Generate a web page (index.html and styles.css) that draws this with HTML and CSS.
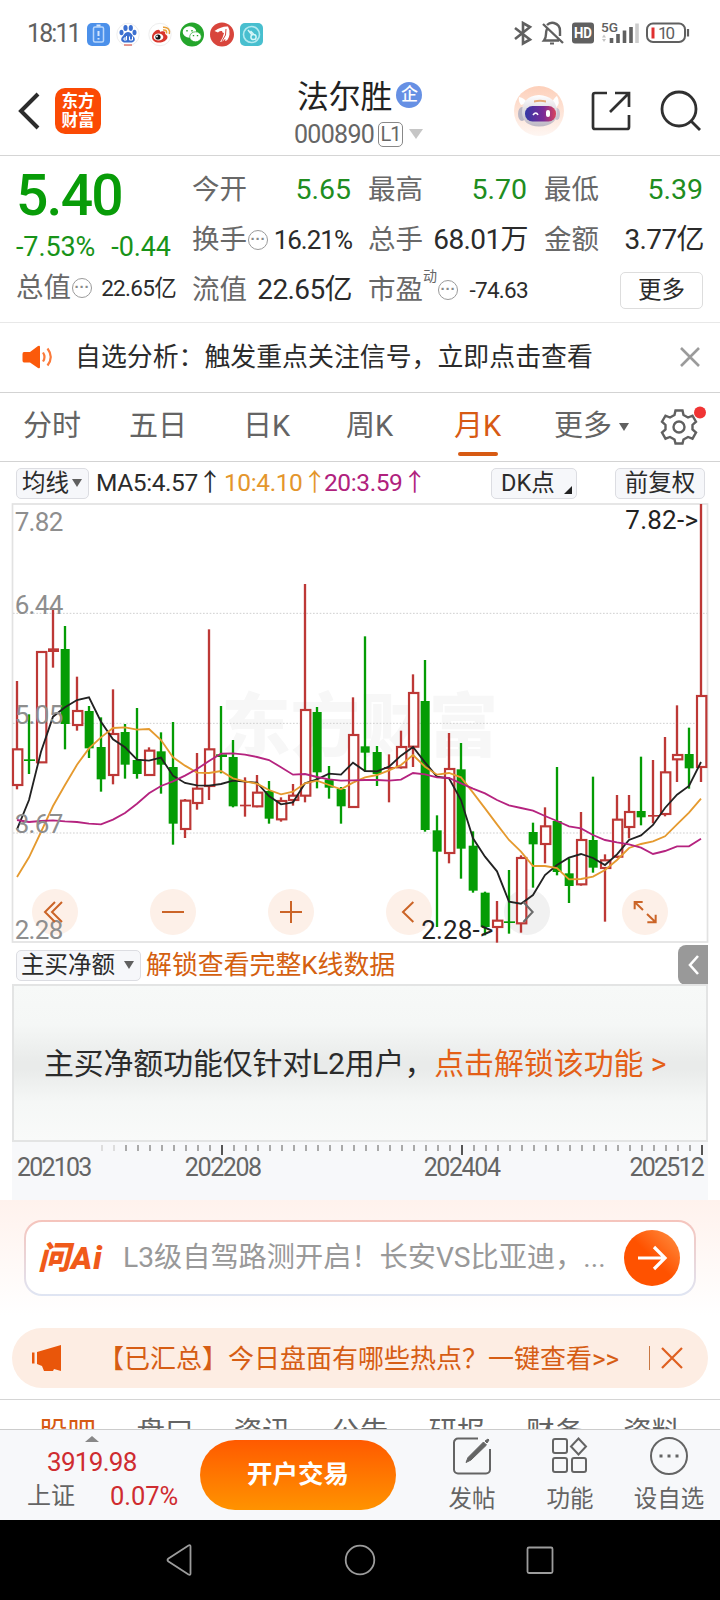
FILE: index.html
```html
<!DOCTYPE html>
<html lang="zh-CN">
<head>
<meta charset="utf-8">
<title>法尔胜 000890</title>
<link rel="stylesheet" href="styles.css">
</head>
<body>
<div class="screen">
  <div class="status">
    <span class="clock">18:11</span>
    <svg class="status-apps" width="178" height="26" viewBox="0 0 178 26">
      <rect x="1" y="2" width="23" height="23" rx="5" fill="#4b90ea"/>
      <rect x="7.500" y="6" width="10" height="15" rx="1.500" fill="none" stroke="#b9d6fb" stroke-width="1.500"/><path d="M10.500 4.500h4M12.500 10v5M12.500 17v1.500" stroke="#d5e6fd" stroke-width="2"/>
      <circle cx="42" cy="13.500" r="11.200" fill="#fff" stroke="#eee"/>
      <g fill="#3b6fd0"><ellipse cx="35.500" cy="11.500" rx="2" ry="2.800"/><ellipse cx="39.500" cy="7" rx="2.100" ry="3"/><ellipse cx="44.800" cy="7" rx="2.100" ry="3"/><ellipse cx="48.500" cy="11.500" rx="2" ry="2.800"/><path d="M42 11c-3 0-4 3-6 5-2 3 0 5.500 3 5.500h6c3 0 5-2.500 3-5.500-2-2-3-5-6-5z"/></g>
      <path d="M40.500 15v4h-2.500v-2h2.500M43.500 15.500v3.500h3v-3.500" fill="none" stroke="#fff"/><path d="M38 24h8" stroke="#d3382c"/>
      <circle cx="74" cy="13.500" r="11.200" fill="#fff" stroke="#eee"/>
      <path d="M66 16c0-4 5-8 7-7 1.500.5 1 2 1 2s4-1.500 5 0c.5 1 0 2 0 2 6 3 0 9-6 8.500-4 0-7-2-7-5.500z" fill="#d9362c"/><ellipse cx="72.500" cy="16" rx="4.800" ry="3.600" fill="#fff"/><circle cx="72" cy="16" r="2.600" fill="#111"/><circle cx="71" cy="15.500" r=".9" fill="#fff"/><path d="M77 9c3-.5 4 1 3.500 3.500M77 6.200c5-.5 7.500 3 6.300 6.800" fill="none" stroke="#e9a03a" stroke-width="1.500"/>
      <circle cx="106" cy="13.500" r="12" fill="#24a52b"/><ellipse cx="103.500" cy="11" rx="6.800" ry="5.700" fill="#fff"/><ellipse cx="109.500" cy="15.800" rx="5.800" ry="5" fill="#fff" stroke="#24a52b" stroke-width=".7"/><path d="M101 9v1.500M106 9v1.500M107.500 14v1.200M111.500 14v1.200" stroke="#24a52b" stroke-width="1.400"/>
      <circle cx="136" cy="13.500" r="12" fill="#d8453c"/><path d="M128.500 10q7-5 13.500-4.500 2 3 1.500 8-1 6-4.500 6.500 1-2 0-2-2 3-5 3 3-4 4-9-2 0-2-2-3-.5-4 1.500z" fill="#fff"/><path d="M136 20q5-6 4-12" stroke="#d8453c" fill="none"/>
      <rect x="154" y="2" width="23" height="23" rx="5" fill="#48bfcf"/><circle cx="165.500" cy="13.500" r="8" fill="none" stroke="#b4eaf0" stroke-width="1.600"/><circle cx="167.500" cy="16" r="2.600" fill="none" stroke="#d6f6f8" stroke-width="1.500"/><path d="M166 14l-4-5M167.500 13l-3-3" stroke="#d6f6f8" stroke-width="1.500"/>
    </svg>
    <svg class="status-signals" width="180" height="26" viewBox="0 0 180 26" fill="none" stroke="#606060">
      <path d="M2 7l15 11.500-7 4V2l7 4L2 18" stroke-width="2.600"/>
      <path d="M34 4q3-3 7-2 6 1.500 6 8v5M30 3l20 19M34 8q-1 2-1 5 0 4-2 6.500h15" stroke-width="2.400"/><path d="M37 22.500h4" stroke-width="2"/>
      <rect x="59" y="1.500" width="22" height="21" rx="3" fill="#606060" stroke="none"/>
      <text x="61" y="17" class="hd" textLength="18" lengthAdjust="spacingAndGlyphs">HD</text>
      <text x="88" y="10.500" class="fiveg" textLength="17" lengthAdjust="spacingAndGlyphs">5G</text>
      <path d="M98.500 17v5M105 13v9M111.500 9.500V22M118 6v16" stroke-width="3.600"/><path d="M124 2.500V22" stroke="#ccc" stroke-width="3.600"/><path d="M89 16.500l2-3 2 3zM89 18l2 3 2-3z" fill="#c4c4c4" stroke="none"/>
      <rect x="134" y="2.500" width="38" height="18.500" rx="6" stroke-width="2"/><path d="M175 8v7.500" stroke-width="2.200"/><path d="M140 6.500v11" stroke="#e02f2f" stroke-width="3"/>
      <text x="145" y="18" class="batt" textLength="17">10</text>
    </svg>
  </div>

  <header class="head">
    <svg class="back" width="24" height="40" viewBox="0 0 24 40"><path d="M22 3L5 20l17 17" fill="none" stroke="#2c2c2c" stroke-width="4"/></svg>
    <div class="brand"><span>东方</span><span>财富</span></div>
    <div class="title">
      <div class="name"><span>法尔胜</span><i class="ent">企</i></div>
      <div class="code"><span>000890</span><i class="lv">L1</i><i class="tri light"></i></div>
    </div>
    <svg class="bot" width="52" height="52" viewBox="0 0 52 52">
      <defs>
        <linearGradient id="g1" x1="0" y1="0" x2="0" y2="1"><stop offset="0" stop-color="#fdd0ba"/><stop offset="1" stop-color="#fef6f2"/></linearGradient>
        <linearGradient id="g2"><stop offset="0" stop-color="#3338a5"/><stop offset=".6" stop-color="#7b2a97"/><stop offset="1" stop-color="#d9445c"/></linearGradient>
        <linearGradient id="g3" x1="0" y1="0" x2="0" y2="1"><stop offset="0" stop-color="#fff"/><stop offset="1" stop-color="#bdb8c4"/></linearGradient>
      </defs>
      <circle cx="26" cy="26" r="25" fill="url(#g1)"/>
      <path d="M8 20q-3-4-2-8 6 1 8 6zM39 17q3-5 5-6 4 7-1 12z" fill="#fff"/>
      <ellipse cx="9" cy="29" rx="4" ry="7" fill="#b9b6c4"/><ellipse cx="44" cy="29" rx="3" ry="6" fill="#c9c4cf"/>
      <path d="M9 28q0-17 17-18Q43 11 44 26q1 15-18 15.500Q10 41 9 28z" fill="url(#g3)"/>
      <path d="M21 15.500q6-1.500 12 0v2q-6-1.500-12 0z" fill="#e4a877"/>
      <rect x="12" y="21" width="31" height="15.500" rx="7.500" fill="url(#g2)"/>
      <path d="M20 30q3-4 5 0" fill="none" stroke="#fff" stroke-width="1.600"/><rect x="33" y="25" width="4" height="7" rx="2" fill="#fff"/>
    </svg>
    <svg class="share" width="42" height="42" viewBox="0 0 42 42" fill="none" stroke="#303030" stroke-width="2.700"><path d="M17 3H5a2 2 0 0 0-2 2v32a2 2 0 0 0 2 2h32a2 2 0 0 0 2-2V25M25 3h14v14M39 3L20 22"/></svg>
    <svg class="search" width="42" height="42" viewBox="0 0 42 42" fill="none" stroke="#303030" stroke-width="2.800"><circle cx="19" cy="19" r="17"/><path d="M31 31l9 9"/></svg>
  </header>

  <section class="quote">
    <div class="main">
      <div class="price">5.40</div>
      <div class="chg"><span>-7.53%</span><span>-0.44</span></div>
      <div class="cell small"><b>总值</b><i class="dots">···</i><span>22.65亿</span></div>
    </div>
    <div class="grid">
      <div class="cell up"><b>今开</b><span>5.65</span></div>
      <div class="cell up"><b>最高</b><span>5.70</span></div>
      <div class="cell up"><b>最低</b><span>5.39</span></div>
      <div class="cell mid"><b>换手</b><i class="dots">···</i><span>16.21%</span></div>
      <div class="cell"><b>总手</b><span>68.01万</span></div>
      <div class="cell"><b>金额</b><span>3.77亿</span></div>
      <div class="cell"><b>流值</b><span>22.65亿</span></div>
      <div class="cell small"><b>市盈</b><sup>动</sup><i class="dots">···</i><span>-74.63</span></div>
      <div class="cell end"><em class="more">更多</em></div>
    </div>
  </section>

  <section class="notice">
    <svg width="32" height="28" viewBox="0 0 32 28"><path d="M2 8h6l8-6q2-1 2 1v20q0 2-2 1l-8-5.500H2q-1.500 0-1.500-2V10Q.5 8 2 8z" fill="#fb5a0b"/><path d="M21 8.500q3 4.500 0 9M25.500 4.500q6.500 8.500 0 17" fill="none" stroke="#fb7a3a" stroke-width="2.200"/></svg>
    <span>自选分析：触发重点关注信号，立即点击查看</span>
    <svg class="x" width="22" height="22" viewBox="0 0 22 22"><path d="M2 1l18 18M20 1L2 19" stroke="#9b9b9b" stroke-width="2.600"/></svg>
  </section>

  <nav class="tabs">
    <span>分时</span><span>五日</span><span>日K</span><span>周K</span><span class="on">月K</span><span class="moretab">更多<i class="tri"></i></span>
    <svg class="gear" width="46" height="44" viewBox="0 0 46 44" fill="none" stroke="#606060" stroke-width="2.400">
      <path d="M15.500 7.500h7l1 4.500 4.500 2.500 4.500-1.800 3.500 6-3.500 3.300v4.500l3.500 3-3.500 6.200-4.500-1.700-4.500 2.500-1 4h-7l-1-4-4.500-2.500-4.500 1.700L2 29.500l3.500-3V22L2 18.700l3.500-6L10 14.500l4.500-2.500z"/><circle cx="19" cy="24" r="5.500"/><circle cx="40" cy="9.500" r="6" fill="#f03434" stroke="none"/>
    </svg>
  </nav>

  <section class="ma">
    <em class="chip first">均线<i class="tri"></i></em>
    <span class="m5">MA5:4.57↑</span><span class="m10">10:4.10↑</span><span class="m20">20:3.59↑</span>
    <em class="chip dk">DK点<i class="corner"></i></em>
    <em class="chip fq">前复权</em>
  </section>

  <svg class="chart" id="chart" width="720" height="443" viewBox="0 9 2160 1329"></svg>

  <section class="sub">
    <em class="chip subchip">主买净额<i class="tri"></i></em>
    <span>解锁查看完整K线数据</span>
    <div class="handle"><svg width="14" height="22" viewBox="0 0 14 22"><path d="M11 2L3 11l8 9" fill="none" stroke="#fff" stroke-width="2.600"/></svg></div>
  </section>
  <section class="lock"><span>主买净额功能仅针对L2用户，</span><a>点击解锁该功能 &gt;</a></section>
  <section class="axis">
    <svg id="ticks" width="696" height="13" viewBox="12 0 696 13"></svg>
    <div class="dates"><span>202103</span><span>202208</span><span>202404</span><span>202512</span></div>
  </section>

  <section class="ai">
    <div class="ask">
      <div class="logo">问Ai</div>
      <span>L3级自驾路测开启！长安VS比亚迪，...</span>
      <div class="go"><svg width="32" height="28" viewBox="0 0 32 28"><path d="M2 14h27M18 3l11 11-11 11" fill="none" stroke="#fff" stroke-width="3.200"/></svg></div>
    </div>
  </section>
  <section class="banner">
    <svg width="32" height="28" viewBox="0 0 32 28" fill="#e9560a"><path d="M1 8.500h2.500v11H1zM6 8l24-7v26l-7-2-1 2h-9l-2-5-5-2z"/></svg>
    <span>【已汇总】今日盘面有哪些热点？一键查看&gt;&gt;</span>
    <i class="bar"></i>
    <svg class="bx" width="22" height="22" viewBox="0 0 22 22"><path d="M1 1l20 20M21 1L1 21" stroke="#df6020" stroke-width="2.200"/></svg>
  </section>
  <nav class="feed"><span class="on">股吧</span><span>盘口</span><span>资讯</span><span>公告</span><span>研报</span><span>财务</span><span>资料</span></nav>

  <footer class="bottom">
    <div class="index">
      <i class="tri upward"></i>
      <span class="red">3919.98</span>
      <div><span>上证</span><span class="red">0.07%</span></div>
    </div>
    <div class="open">开户交易</div>
    <div class="act"><svg width="40" height="40" viewBox="0 0 40 40" fill="none" stroke="#646464" stroke-width="2"><path d="M26 2.500H6A4 4 0 0 0 2 6.500v27a4 4 0 0 0 4 4h28a4 4 0 0 0 4-4V13"/><path d="M14 26.500l2-5L31.500 6l3 3L19 24zM33 5l3-2 1 1-2 3z" fill="#646464" stroke-width="1"/></svg><span>发帖</span></div>
    <div class="act"><svg width="40" height="40" viewBox="0 0 40 40" fill="none" stroke="#646464" stroke-width="2"><rect x="3" y="3" width="14" height="14" rx="2"/><path d="M28.500 2.500l7.500 8-7.500 8-7.500-8z"/><rect x="3" y="22" width="14" height="14" rx="2"/><rect x="22" y="22" width="14" height="14" rx="2"/></svg><span>功能</span></div>
    <div class="act wide"><svg width="40" height="40" viewBox="0 0 40 40" fill="none" stroke="#646464" stroke-width="2"><circle cx="20" cy="20" r="18"/><path d="M10.500 20h3M18.500 20h3M26.500 20h3" stroke-width="3"/></svg><span>设自选</span></div>
  </footer>
  <div class="sys">
    <svg width="720" height="80" viewBox="0 0 720 80" fill="none" stroke="#9c9c9c" stroke-width="1.800"><path d="M190.500 26.500v27q0 2-2 1l-20-13q-2-1.500 0-3l20-13q2-1 2 1z"/><circle cx="360" cy="40" r="14.300"/><rect x="527.500" y="27.500" width="25" height="25.500" rx="1.500"/></svg>
  </div>
</div>
<script src="chart.js"></script>
</body>
</html>
```

FILE: styles.css
```css
* { box-sizing: border-box; }
body { margin: 0; background: #fff; }
.screen { width: 720px; height: 1600px; overflow: hidden; display: flex; flex-direction: column; font-family: Roboto, "Noto Sans CJK SC", sans-serif; color: #2b2b2b; line-height: 1; white-space: nowrap; }
.screen > * { flex: none; }
i, em { font-style: normal; }
svg { display: block; flex: none; }
.tri { display: inline-block; border: 5px solid transparent; border-top: 8px solid #606060; border-bottom: 0; }

.status { height: 66px; display: flex; align-items: flex-start; padding: 21px 30px 0 27px; color: #606060; }
.clock { width: 59px; font-size: 25px; line-height: 26px; letter-spacing: -1.9px; }
.status-signals { margin-left: auto; margin-right: -3px; }
.hd { font: bold 15px Roboto, sans-serif; fill: #fff; stroke: none; }
.fiveg { font: 500 13px Roboto, sans-serif; fill: #606060; stroke: none; }
.batt { font: 17px Roboto, sans-serif; fill: #606060; stroke: none; }

.head { height: 90px; display: flex; padding-left: 16px; border-bottom: 1px solid #d5d5d5; }
.back { margin-top: 25px; }
.brand { width: 46px; height: 46px; margin: 22px 0 0 15px; padding-top: 4px; border-radius: 10px; background: #fb4a04; color: #fff; font-weight: 700; font-size: 16.500px; line-height: 19px; display: flex; flex-direction: column; align-items: center; }
.title { width: 150px; margin: 13px 0 0 190px; }
.name { display: flex; align-items: center; padding-left: 6px; font-size: 31.800px; line-height: 36px; color: #222; }
.ent { width: 26px; height: 26px; margin: -4px 0 0 4px; border-radius: 50%; background: #6690e4; color: #fff; font-size: 17px; font-weight: 500; line-height: 25px; text-align: center; }
.code { display: flex; align-items: center; height: 26px; margin-top: 6px; padding-left: 3px; font-size: 25px; color: #666; }
.code span { width: 84px; padding-top: 1px; letter-spacing: -.7px; }
.lv { width: 25px; height: 25px; border: 1.500px solid #888; border-radius: 5px; font-size: 20px; line-height: 23px; letter-spacing: -1px; text-align: center; }
.tri.light { margin-left: 6px; border-width: 10px 7px 0; border-top-color: #c6c6c6; }
.bot { margin: 19px 0 0 72px; }
.share { margin: 24px 0 0 25px; }
.search { margin: 24px 0 0 28px; }

.quote { height: 167px; display: flex; border-bottom: 1px solid #e8e8e8; }
.main { width: 192px; padding: 17px 0 0 16px; }
.price { height: 46px; color: #089c08; font-size: 57px; font-weight: 500; line-height: 46px; letter-spacing: -1.800px; }
.chg { display: flex; gap: 16px; height: 28px; margin-top: 14px; font-size: 27px; line-height: 28px; letter-spacing: -.1px; color: #189318; }
.grid { width: 511px; display: grid; grid-template-columns: 159px 159px 159px; column-gap: 17px; grid-template-rows: 50px 50px 50px; padding-top: 9px; }
.cell { display: flex; align-items: center; position: relative; font-size: 28px; }
.cell b { font-weight: 400; font-size: 27.500px; color: #686868; }
.cell span { margin-left: auto; margin-right: -1px; letter-spacing: -.6px; }
.cell.up span { color: #208d20; font-size: 28.500px; letter-spacing: 0; margin-right: 0; }
.cell.mid span { font-size: 26px; letter-spacing: -1px; }
.cell.small span { font-size: 22.500px; letter-spacing: -.7px; }
.cell.end { justify-content: flex-end; }
.main .cell { width: 159px; height: 28px; margin-top: 13px; }
.dots { width: 20px; height: 20px; margin-left: 1px; border: 1.800px solid #9a9a9a; border-radius: 50%; font: bold 15px/16px "Liberation Sans", sans-serif; color: #8a8a8a; text-align: center; }
.cell sup { font-size: 14px; color: #666; align-self: flex-start; margin: 4px 0 0 0; }
.more { width: 83px; height: 37px; border: 1.500px solid #ddd; border-radius: 5px; font-size: 23.500px; line-height: 35px; text-align: center; }

.notice { height: 70px; display: flex; align-items: center; padding: 0 19px 0 22px; border-bottom: 1px solid #d3d3d3; font-size: 25.900px; }
.notice span { margin-left: 21px; padding-top: 1px; }
.notice .x { margin-left: auto; }

.tabs { height: 69px; display: flex; border-bottom: 1px solid #d3d3d3; font-size: 29px; line-height: 67px; color: #646464; padding-left: 23px; }
.tabs span { width: 106px; }
.tabs span:nth-child(2) { width: 114px; }
.tabs span:nth-child(3) { width: 103px; }
.tabs span:nth-child(4) { width: 108px; }
.tabs .on { width: 100px; color: #d75a13; position: relative; }
.tabs .on::after { content: ""; position: absolute; left: 4px; top: 59px; width: 40px; height: 4px; border-radius: 2px; background: #d75a13; }
.tabs .moretab { width: 106px; }
.moretab .tri { margin: 0 0 5px 7px; }
.gear { margin: 10px 0 0 0; }

.ma { height: 41px; display: flex; align-items: center; padding: 1px 15px 0 16px; font-size: 24.500px; letter-spacing: -.4px; }
.chip { height: 31px; border: 1px solid #dcdde2; border-radius: 5px; background: #f6f7fa; font-size: 23.500px; line-height: 29px; letter-spacing: 0; }
.first { width: 73px; padding-left: 5px; }
.first .tri { margin: 0 0 4px 3px; }
.m5 { width: 128px; margin-left: 7px; }
.m10 { width: 100px; color: #e4962c; }
.m20 { color: #b0217d; }
.dk { width: 86px; margin-left: auto; padding-left: 9px; position: relative; }
.corner { position: absolute; right: 4px; bottom: 4px; border-left: 8px solid transparent; border-bottom: 8px solid #222; }
.fq { width: 90px; margin-left: 38px; text-align: center; }

.sub { height: 38px; display: flex; align-items: center; padding: 0 12px 0 16px; font-size: 25.900px; color: #d4600f; }
.subchip { width: 125px; padding-left: 4px; color: #2b2b2b; }
.subchip .tri { margin: 0 0 4px 9px; }
.sub span { margin-left: 5px; padding-top: 1px; }
.handle { width: 30px; height: 40px; margin: -1px 0 0 auto; border-radius: 8px 0 0 8px; background: #999; display: flex; align-items: center; padding-left: 9px; }
.lock { height: 158px; margin: 0 12px; border: 2px solid #e3e4e4; display: flex; align-items: center; padding: 2px 0 0 30px; font-size: 29.900px; background: linear-gradient(#f7f9f8 0, #f5f7f6 25%, #e9ebea 49%, #e9ebea 54%, #f5f7f6 75%, #f9faf9 100%); }
.lock span { letter-spacing: -.1px; }
.lock a { color: #e45f17; }
.axis { height: 58px; margin: 0 12px; background: #f7f8fa; padding-top: 1px; }
.dates { display: flex; margin-top: -1px; padding: 0 5px; font-size: 25px; letter-spacing: -1.400px; color: #656565; }
.dates span:nth-child(1) { width: 168px; letter-spacing: -1.800px; }
.dates span:nth-child(2) { width: 239px; }
.dates span:nth-child(3) { width: 206px; }
.dates span:nth-child(4) { letter-spacing: -1.800px; }

.ai { height: 128px; padding: 20px 24px 0; background: linear-gradient(#fff2ed, #fff 90%); }
.ask { height: 76px; border: 2px solid transparent; border-radius: 18px; background: linear-gradient(#fff, #fff) padding-box, linear-gradient(#f5c4bc, #dfe5f3) border-box; display: flex; align-items: center; padding: 0 14px 0 12px; font-size: 28.200px; color: #999; }
.ask span { padding-top: 1px; }
.logo { width: 85px; color: #f05a1a; font-weight: 900; font-size: 32px; font-style: italic; letter-spacing: 1px; }
.go { width: 56px; height: 56px; margin-left: auto; border-radius: 50%; background: linear-gradient(45deg, #ff5200 50%, #ff9346); display: flex; align-items: center; justify-content: center; }
.banner { height: 60px; margin: 0 12px; border-radius: 30px; background: #fdede3; display: flex; align-items: center; padding: 0 25px 0 19px; font-size: 26px; color: #d65d14; }
.banner span { margin-left: 35px; padding-top: 2px; }
.bar { width: 1.500px; height: 24px; margin-left: auto; background: #c87742; }
.bx { margin-left: 11px; }
.feed { height: 30px; margin-top: 11px; border-top: 1px solid #d5d5d5; padding: 16px 0 0 39px; overflow: hidden; display: flex; font-size: 28.500px; line-height: 33px; color: #646464; }
.feed span { width: 97.400px; flex: none; }
.feed .on { color: #d75a13; }

.bottom { height: 91px; background: #f7f8fa; border-top: 1px solid #ccc; display: flex; font-size: 23.500px; color: #646464; }
.index { width: 200px; padding: 6px 22px 0 27px; font-size: 24px; position: relative; }
.index .upward { display: block; border: 7px solid transparent; border-bottom: 6px solid #888; border-top: 0; margin-left: 58px; width: 0; }
.index > span { display: block; margin: 7px 0 9px 20px; font-size: 26px; letter-spacing: -.7px; }
.index > div { display: flex; justify-content: space-between; }
.index > div .red { font-size: 25.500px; letter-spacing: -.1px; }
.red { color: #cf2c30; }
.open { width: 196px; height: 70px; margin-top: 10px; border-radius: 35px; background: linear-gradient(#ff5a00, #ff9300); color: #fff; font-size: 25.500px; font-weight: 700; line-height: 69px; text-align: center; }
.act { width: 98px; padding-top: 6px; display: flex; flex-direction: column; align-items: center; gap: 12px; }
.open + .act { margin-left: 27px; }
.act.wide { width: 100px; }
.sys { height: 80px; background: #000; }

/* chart text is sized in thirds of a pixel */
.scale { font: 78px Roboto, sans-serif; fill: #8e8e8e; }
.mark { font: 78px Roboto, sans-serif; fill: #222; }
.wm { font: 900 208px "Noto Sans CJK SC", sans-serif; fill: #f7f7f7; }
```

FILE: chart.js
```js
// Monthly candles: [colour, wick top, wick bottom, body top, body bottom], three units per pixel.
const candles = [
['r',543,868,748,855],['g',643,822,778,783],['r',456,787,456,787],['s',330,503,445,456],['g',378,748,447,672],['r',530,692,633,675],['g',618,774,633,745],['g',652,875,741,838],['r',568,853,702,825],['g',672,836,696,794],
['g',624,836,780,822],['r',742,825,752,825],['g',697,881,754,794],['g',666,1034,801,971],['r',897,1014,902,987],['r',759,929,866,909],['r',388,900,748,858],['g',618,820,763,771],['g',720,922,771,919],['s',832,950,914,919],
['r',825,922,878,919],['g',843,971,873,956],['r',892,965,903,958],['r',852,917,887,900],['r',252,907,630,887],['g',621,865,636,817],['g',798,896,838,863],['g',861,971,867,919],['r',592,921,705,921],['g',409,815,739,758],
['g',738,858,756,822],['s',763,907,801,807],['r',692,806,741,802],['r',523,801,579,740],['g',480,995,603,990],['g',946,1281,991,1055],['r',699,1090,807,1059],['g',729,1136,808,1046],['g',994,1178,1037,1172],['g',1175,1306,1178,1281],
['r',1203,1328,1262,1281],['g',1110,1301,1264,1269],['r',1066,1298,1074,1270],['g',968,1163,996,1033],['r',922,1090,979,1032],['g',801,1126,963,1116],['g',1075,1209,1120,1158],['r',936,1157,1020,1153],['g',830,1118,1020,1103],['r',1063,1265,1081,1104],
['r',885,1074,959,1070],['r',885,1015,936,981],['g',770,976,933,952],['s',780,970,945,950],['r',711,949,817,942],['r',616,846,765,778],['g',683,866,762,805],['r',12,846,588,801]];
const averages = {
'#222': [988,900,755,650,622,600,592,665,718,742,779,782,773,827,849,856,857,852,842,845,848,888,913,907,850,838,821,824,788,813,814,800,767,741,787,830,835,900,1015,1070,1114,1205,1211,1185,1125,1095,1073,1062,1074,1095,1063,1020,1006,975,924,884,858,786],
'#e59a2f': [1131,1072,996,918,855,794,745,712,684,682,689,687,720,772,797,818,819,813,835,844,851,870,883,875,850,842,855,868,848,832,825,811,795,765,800,824,819,832,878,925,973,1020,1055,1098,1098,1104,1138,1137,1130,1110,1080,1044,1032,1024,1009,973,938,896],
'#b5237f': [960,966,963,961,964,966,971,973,959,939,911,880,858,844,827,807,783,761,760,764,771,780,802,824,822,831,838,842,841,840,840,842,839,819,823,832,834,850,866,880,900,916,924,932,948,963,979,985,1005,1020,1027,1033,1043,1062,1053,1039,1039,1016]};
const RED = '#bd3836', GREEN = '#049c04';
let s = '<rect x="37.500" y="12" width="2085" height="1314" fill="#fff" stroke="#e2e2e2" stroke-width="5"/>';
s += '<text class="wm" x="664" y="752" textLength="830">东方财富</text>';
for (const y of [340, 670, 999]) s += `<path d="M39 ${y}H2121" stroke="#cfcfcf" stroke-width="3" stroke-dasharray="5 5"/>`;
[165, 519, 873, 1227, 1581, 1935].forEach(x => { s += `<circle cx="${x}" cy="1236" r="69" fill="${x === 1581 ? '#f1f1f1' : '#fdf0e8'}"/>`; });
candles.forEach(([k, t, b, o, c], i) => {
  const x = 51 + 36 * i, col = k === 'g' ? GREEN : RED;
  s += `<path d="M${x} ${t}V${b}" stroke="${col}" stroke-width="7"/>`;
  if (k === 'r') s += `<rect x="${x - 12}" y="${o}" width="28" height="${c - o}" fill="#fff" stroke="${col}" stroke-width="6.500"/>`;
  else if (c - o < 14) s += `<rect x="${x - 15}" y="${o}" width="33" height="${c - o}" fill="${col}"/>`;
  else s += `<rect x="${x - 13}" y="${o}" width="27" height="${c - o}" fill="${col}"/>`;
});
for (const [col, ys] of Object.entries(averages))
  s += `<polyline points="${ys.map((y, i) => (51 + 36 * i) + ',' + y).join(' ')}" fill="none" stroke="${col}" stroke-width="5.500"/>`;
[['7.82', 93], ['6.44', 342], ['5.05', 671], ['3.67', 999], ['2.28', 1318]].forEach(([t, y]) => { s += `<text class="scale" x="44" y="${y}" textLength="146">${t}</text>`; });
s += '<text class="mark" x="1876" y="87" textLength="218">7.82-&gt;</text><text class="mark" x="1264" y="1317" textLength="216">2.28-&gt;</text>';
s += '<g fill="none" stroke="#cb6427" stroke-width="6"><path d="M165 1206l-30 30 30 30M186 1206l-30 30 30 30M486 1236h66M840 1236h66M873 1203v66M1240 1206l-31 30 31 30"/><path stroke="#6c6c6c" d="M1570 1206l28 30-28 30"/><path d="M1929 1230l-25-24M1904 1228v-22h24M1941 1242l26 25M1967 1244v23h-25"/></g>';
document.getElementById('chart').innerHTML = s;

let t = '';
for (let x = 102; x <= 702; x += 12) {
  const long = (x - 222) % 240 === 0;
  t += `<path d="M${x} 2v${long ? 10 : 6}" stroke="${long ? '#555' : x < 120 ? '#ddd' : '#aaa'}" stroke-width="2"/>`;
}
document.getElementById('ticks').innerHTML = t;
```
